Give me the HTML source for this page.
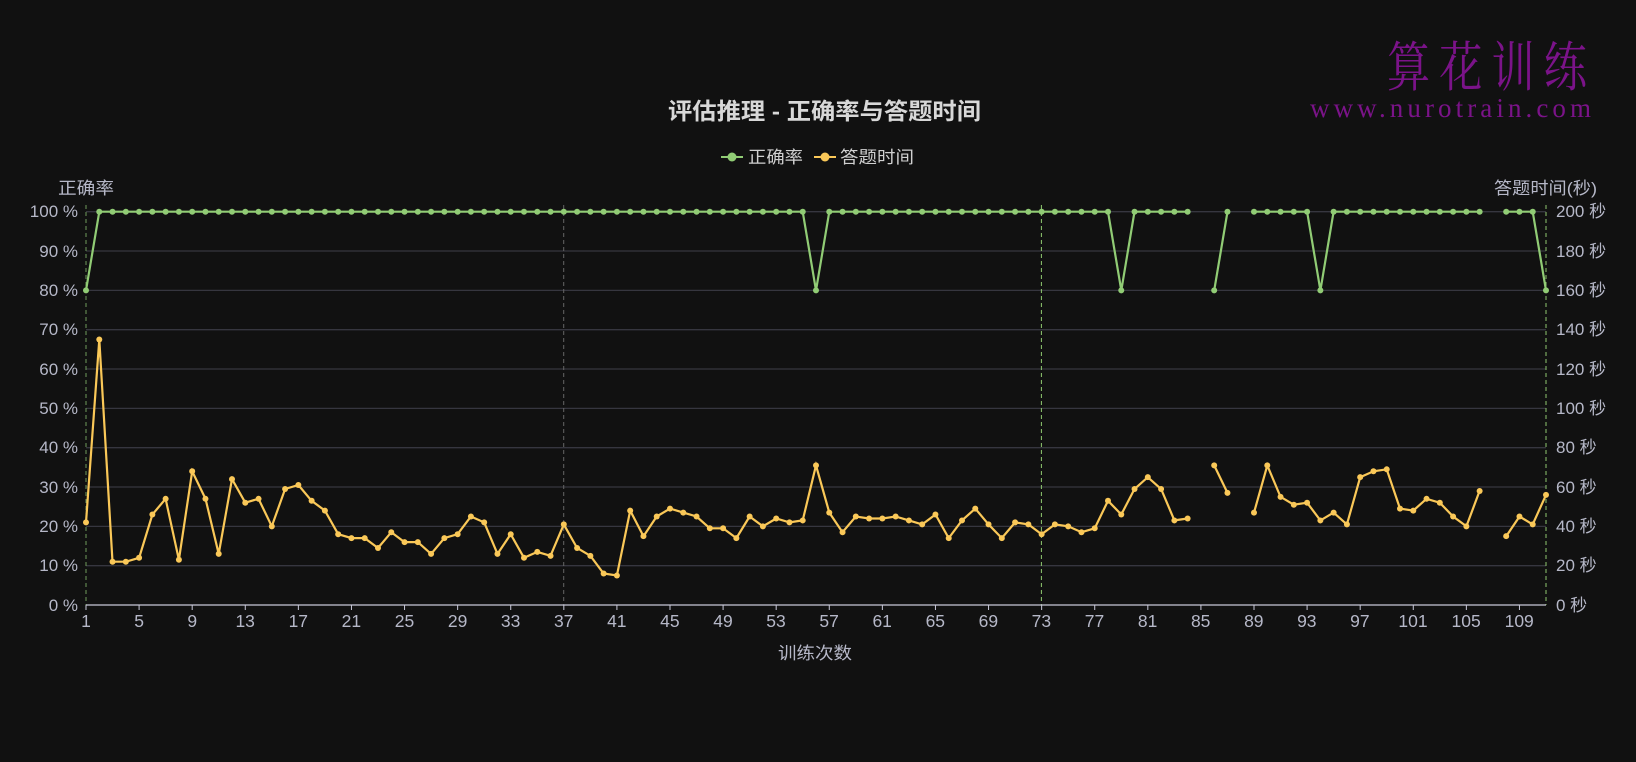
<!DOCTYPE html>
<html><head><meta charset="utf-8"><style>
html,body{margin:0;padding:0;background:#111111;}
svg{display:block;}
text{font-family:"Liberation Sans","Noto Sans CJK SC",sans-serif;}
</style></head><body>
<svg id="s" width="1636" height="762" viewBox="0 0 1636 762" xmlns="http://www.w3.org/2000/svg">
<rect width="1636" height="762" fill="#111111"/>
<g stroke="#36363f" stroke-width="1.3">
<line x1="86" x2="1546" y1="211.7" y2="211.7"/>
<line x1="86" x2="1546" y1="251" y2="251"/>
<line x1="86" x2="1546" y1="290.4" y2="290.4"/>
<line x1="86" x2="1546" y1="329.7" y2="329.7"/>
<line x1="86" x2="1546" y1="369" y2="369"/>
<line x1="86" x2="1546" y1="408.4" y2="408.4"/>
<line x1="86" x2="1546" y1="447.7" y2="447.7"/>
<line x1="86" x2="1546" y1="487" y2="487"/>
<line x1="86" x2="1546" y1="526.4" y2="526.4"/>
<line x1="86" x2="1546" y1="565.7" y2="565.7"/>
</g>
<g stroke-dasharray="4,3" stroke-width="1">
<line x1="86" x2="86" y1="205" y2="605" stroke="#6f9a5a"/>
<line x1="563.7" x2="563.7" y1="205" y2="605" stroke="#666"/>
<line x1="1041.4" x2="1041.4" y1="205" y2="605" stroke="#8fc870"/>
<line x1="1546" x2="1546" y1="205" y2="605" stroke="#8fc870"/>
</g>
<line x1="86" x2="1546" y1="605" y2="605" stroke="#c8c8d8" stroke-width="1.3"/>
<g id="ticks" stroke="#c8c8d8"></g>
<g id="series"></g>
<g fill="#b6b8c8" font-size="17" text-anchor="end">
<text x="78" y="217">100 %</text><text x="78" y="257">90 %</text><text x="78" y="296">80 %</text><text x="78" y="335">70 %</text><text x="78" y="375">60 %</text><text x="78" y="414">50 %</text><text x="78" y="453">40 %</text><text x="78" y="493">30 %</text><text x="78" y="532">20 %</text><text x="78" y="571">10 %</text><text x="78" y="611">0 %</text>
</g>
<g fill="#b6b8c8" font-size="17" text-anchor="start">
<text x="1556" y="217">200 秒</text><text x="1556" y="257">180 秒</text><text x="1556" y="296">160 秒</text><text x="1556" y="335">140 秒</text><text x="1556" y="375">120 秒</text><text x="1556" y="414">100 秒</text><text x="1556" y="453">80 秒</text><text x="1556" y="493">60 秒</text><text x="1556" y="532">40 秒</text><text x="1556" y="571">20 秒</text><text x="1556" y="611">0 秒</text>
</g>
<g fill="#b6b8c8" font-size="17.5" text-anchor="middle">
<text x="86" y="627">1</text><text x="139.1" y="627">5</text><text x="192.2" y="627">9</text><text x="245.2" y="627">13</text><text x="298.3" y="627">17</text><text x="351.4" y="627">21</text><text x="404.5" y="627">25</text><text x="457.6" y="627">29</text><text x="510.6" y="627">33</text><text x="563.7" y="627">37</text><text x="616.8" y="627">41</text><text x="669.9" y="627">45</text><text x="723" y="627">49</text><text x="776" y="627">53</text><text x="829.1" y="627">57</text><text x="882.2" y="627">61</text><text x="935.3" y="627">65</text><text x="988.4" y="627">69</text><text x="1041.4" y="627">73</text><text x="1094.5" y="627">77</text><text x="1147.6" y="627">81</text><text x="1200.7" y="627">85</text><text x="1253.8" y="627">89</text><text x="1306.8" y="627">93</text><text x="1359.9" y="627">97</text><text x="1413" y="627">101</text><text x="1466.1" y="627">105</text><text x="1519.2" y="627">109</text>
</g>
<text x="778" y="659" fill="#b6b8c8" font-size="17" textLength="74" lengthAdjust="spacingAndGlyphs">训练次数</text>
<text x="58" y="194" fill="#b6b8c8" font-size="17" textLength="56" lengthAdjust="spacingAndGlyphs">正确率</text>
<text x="1494" y="194" fill="#b6b8c8" font-size="17" textLength="103" lengthAdjust="spacingAndGlyphs">答题时间(秒)</text>
<text x="668" y="119" fill="#d8d8d8" font-size="23" font-weight="bold" textLength="313" lengthAdjust="spacingAndGlyphs">评估推理 - 正确率与答题时间</text>
<line x1="721" x2="743" y1="157" y2="157" stroke="#91cc75" stroke-width="2"/><circle cx="732" cy="157" r="4.5" fill="#91cc75"/>
<text x="748" y="163" fill="#d0d0d0" font-size="17" textLength="55" lengthAdjust="spacingAndGlyphs">正确率</text>
<line x1="814" x2="836" y1="157" y2="157" stroke="#fac858" stroke-width="2"/><circle cx="825" cy="157" r="4.5" fill="#fac858"/>
<text x="840" y="163" fill="#d0d0d0" font-size="17" textLength="74" lengthAdjust="spacingAndGlyphs">答题时间</text>
<g transform="translate(1387,86) scale(0.8,1)">
<text x="0" y="0" fill="#7b1389" font-size="54" textLength="250" lengthAdjust="spacing" style="font-family:'Noto Serif CJK SC',serif">算花训练</text>
</g>
<text x="1310" y="117" fill="#7b1389" font-size="27" textLength="281" lengthAdjust="spacing" style="font-family:'Liberation Serif',serif">www.nurotrain.com</text>
</svg>
<script>
var NS="http://www.w3.org/2000/svg";
function X(i){return 86+(i-1)*1460/110;}
var acc=[];for(var i=1;i<=111;i++)acc.push(100);
[1,56,79,86,94,111].forEach(function(i){acc[i-1]=80;});
[85,88,107].forEach(function(i){acc[i-1]=null;});
var t=[42,135,22,22,24,46,54,23,68,54,26,64,52,54,40,59,61,53,48,36,34,34,29,37,32,32,26,34,36,45,42,26,36,24,27,25,41,29,25,16,15,48,35,45,49,47,45,39,39,34,45,40,44,42,43,71,47,37,45,44,44,45,43,41,46,34,43,49,41,34,42,41,36,41,40,37,39,53,46,59,65,59,43,44,null,71,57,null,47,71,55,51,52,43,47,41,65,68,69,49,48,54,52,45,40,58,null,35,45,41,56];
var g=document.getElementById('series');
function draw(vals,yf,col){
 var seg=[];
 function flush(){if(seg.length>1){var p=document.createElementNS(NS,'polyline');p.setAttribute('points',seg.join(' '));p.setAttribute('fill','none');p.setAttribute('stroke',col);p.setAttribute('stroke-width','2.2');g.appendChild(p);}seg=[];}
 vals.forEach(function(v,k){if(v==null){flush();return;}seg.push(X(k+1).toFixed(1)+','+yf(v).toFixed(1));});flush();
 vals.forEach(function(v,k){if(v==null)return;var c=document.createElementNS(NS,'circle');c.setAttribute('cx',X(k+1));c.setAttribute('cy',yf(v));c.setAttribute('r','3');c.setAttribute('fill',col);g.appendChild(c);});
}
draw(acc,function(v){return 605-v/100*393.3;},'#91cc75');
draw(t,function(v){return 605-v/200*393.3;},'#fac858');
var tk=document.getElementById('ticks');
for(var i=1;i<=111;i+=4){var l=document.createElementNS(NS,'line');l.setAttribute('x1',X(i));l.setAttribute('x2',X(i));l.setAttribute('y1',605);l.setAttribute('y2',610);tk.appendChild(l);}
</script>
</body></html>
